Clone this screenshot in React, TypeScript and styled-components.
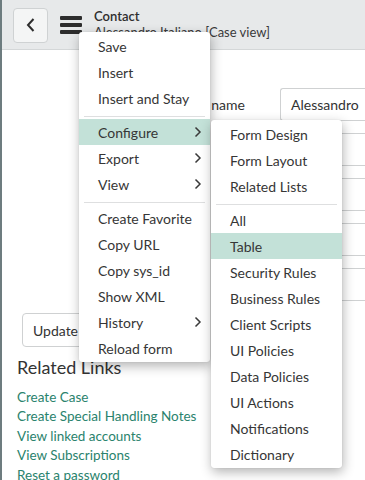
import React from "react";
import styled, { createGlobalStyle } from "styled-components";

const GlobalStyle = createGlobalStyle`
  html, body {
    margin: 0;
    padding: 0;
    background: #ffffff;
  }
  body {
    font-family: "Lato", "Open Sans", sans-serif;
    color: #333333;
  }
`;

interface MenuItemData {
  label: string;
  submenu?: boolean;
  active?: boolean;
  separatorBefore?: boolean;
}

const mainItems: MenuItemData[] = [
  { label: "Save" },
  { label: "Insert" },
  { label: "Insert and Stay" },
  { label: "Configure", submenu: true, active: true, separatorBefore: true },
  { label: "Export", submenu: true },
  { label: "View", submenu: true },
  { label: "Create Favorite", separatorBefore: true },
  { label: "Copy URL" },
  { label: "Copy sys_id" },
  { label: "Show XML" },
  { label: "History", submenu: true },
  { label: "Reload form" },
];

const configureItems: MenuItemData[] = [
  { label: "Form Design" },
  { label: "Form Layout" },
  { label: "Related Lists" },
  { label: "All", separatorBefore: true },
  { label: "Table", active: true },
  { label: "Security Rules" },
  { label: "Business Rules" },
  { label: "Client Scripts" },
  { label: "UI Policies" },
  { label: "Data Policies" },
  { label: "UI Actions" },
  { label: "Notifications" },
  { label: "Dictionary" },
];

// only the first label peeks out from behind the menus
const formRows = [
  { id: "first", label: "First name", value: "Alessandro" },
  { id: "last", label: "", value: "" },
  { id: "title", label: "", value: "" },
  { id: "email", label: "", value: "" },
  { id: "phone", label: "", value: "" },
];

const relatedLinks = [
  "Create Case",
  "Create Special Handling Notes",
  "View linked accounts",
  "View Subscriptions",
  "Reset a password",
];

const Root = styled.div`
  position: relative;
  width: 363px;
  height: 480px;
  overflow: hidden;
  border-left: 2px solid #6d7c7f;
  display: flex;
  flex-direction: column;
`;

const Header = styled.div`
  height: 50px;
  flex-shrink: 0;
  box-sizing: border-box;
  display: flex;
  align-items: center;
  padding-left: 11px;
  gap: 12px;
  background: #e7e9ea;
  border-bottom: 1px solid #d4d7d8;
`;

const BackButton = styled.div`
  width: 35px;
  height: 35px;
  box-sizing: border-box;
  display: flex;
  align-items: center;
  justify-content: center;
  background: #f4f5f5;
  border: 1px solid #cfd2d3;
  border-radius: 4px;
  margin-top: 1px;
`;

const Hamburger = styled.div`
  width: 22px;
  display: flex;
  flex-direction: column;
  gap: 3px;
  margin-top: 1px;
`;

const Bar = styled.div`
  height: 4px;
  border-radius: 1px;
  background: #2d2d2d;
`;

const TitleBlock = styled.div`
  display: flex;
  flex-direction: column;
  margin-top: -1px;
`;

const Title = styled.div`
  font-size: 13px;
  line-height: 16px;
  font-weight: 600;
  color: #2e2e2e;
`;

const Subtitle = styled.div`
  font-size: 13px;
  line-height: 16px;
  color: #3a3a3a;
`;

const Body = styled.div`
  flex: 1;
  display: flex;
  flex-direction: column;
`;

const Form = styled.div`
  display: flex;
  flex-direction: column;
  gap: 12px;
  padding-top: 38px;
`;

const FormRow = styled.div`
  display: grid;
  grid-template-columns: 278px 1fr;
  align-items: center;
`;

const FieldLabel = styled.div`
  font-size: 14px;
  color: #333333;
  text-align: right;
  padding-right: 35px;
`;

const Input = styled.div`
  height: 33px;
  box-sizing: border-box;
  border: 1px solid #cfd1d2;
  border-right: none;
  border-radius: 3px 0 0 3px;
  padding-left: 10px;
  display: flex;
  align-items: center;
  font-size: 14px;
  color: #333333;
`;

const UpdateButton = styled.div`
  margin: 12px 0 0 20px;
  width: 76px;
  height: 34px;
  box-sizing: border-box;
  border: 1px solid #cfd1d2;
  border-radius: 4px;
  display: flex;
  align-items: center;
  padding-left: 10px;
  font-size: 14px;
  color: #333333;
`;

const RelatedHeading = styled.div`
  margin: 8px 0 0 15px;
  font-size: 18px;
  line-height: 24px;
  color: #333333;
`;

const LinkList = styled.div`
  display: flex;
  flex-direction: column;
  margin: 9px 0 0 15px;
`;

const RelatedLink = styled.a`
  font-size: 13.5px;
  line-height: 19.4px;
  color: #2a836d;
  text-decoration: none;
`;

const Menu = styled.div<{ $left: number; $top: number }>`
  position: absolute;
  left: ${({ $left }) => $left}px;
  top: ${({ $top }) => $top}px;
  width: 131px;
  box-sizing: border-box;
  padding: 1px 0 1px;
  background: #ffffff;
  border-radius: 3px;
  box-shadow: 1px 4px 12px rgba(0, 0, 0, 0.3), 0 0 1px rgba(0, 0, 0, 0.2);
  display: flex;
  flex-direction: column;
`;

const Item = styled.div<{ $active?: boolean }>`
  height: 26px;
  display: flex;
  align-items: center;
  justify-content: space-between;
  padding: 0 8px 0 19px;
  font-size: 14px;
  color: #363636;
  white-space: nowrap;
  background: ${({ $active }) => ($active ? "#c3e1d8" : "transparent")};
`;

const Separator = styled.div`
  height: 1px;
  margin: 5px 5px 2px;
  background: #dedfe0;
`;

const Chevron = () => (
  <svg width="8" height="12" viewBox="0 0 8 12">
    <polyline
      points="1.5,1.5 6,6 1.5,10.5"
      fill="none"
      stroke="#3a3a3a"
      strokeWidth="1.5"
    />
  </svg>
);

const MenuList: React.FC<{ items: MenuItemData[]; left: number; top: number }> = ({
  items,
  left,
  top,
}) => (
  <Menu $left={left} $top={top}>
    {items.map((item) => (
      <React.Fragment key={item.label}>
        {item.separatorBefore && <Separator />}
        <Item $active={item.active}>
          {item.label}
          {item.submenu && <Chevron />}
        </Item>
      </React.Fragment>
    ))}
  </Menu>
);

const App: React.FC = () => {
  return (
    <>
      <GlobalStyle />
      <Root>
        <Header>
          <BackButton>
            <svg width="12" height="16" viewBox="0 0 12 16">
              <polyline
                points="8.5,2 3,8 8.5,14"
                fill="none"
                stroke="#2d2d2d"
                strokeWidth="2"
              />
            </svg>
          </BackButton>
          <Hamburger>
            <Bar />
            <Bar />
            <Bar />
          </Hamburger>
          <TitleBlock>
            <Title>Contact</Title>
            <Subtitle>Alessandro Italiano [Case view]</Subtitle>
          </TitleBlock>
        </Header>
        <Body>
          <Form>
            {formRows.map((row) => (
              <FormRow key={row.id}>
                <FieldLabel>{row.label}</FieldLabel>
                <Input>{row.value}</Input>
              </FormRow>
            ))}
          </Form>
          <UpdateButton>Update</UpdateButton>
          <RelatedHeading>Related Links</RelatedHeading>
          <LinkList>
            {relatedLinks.map((link) => (
              <RelatedLink key={link} href="#">
                {link}
              </RelatedLink>
            ))}
          </LinkList>
        </Body>
        <MenuList items={mainItems} left={77} top={32} />
        <MenuList items={configureItems} left={209} top={120} />
      </Root>
    </>
  );
};

export default App;
